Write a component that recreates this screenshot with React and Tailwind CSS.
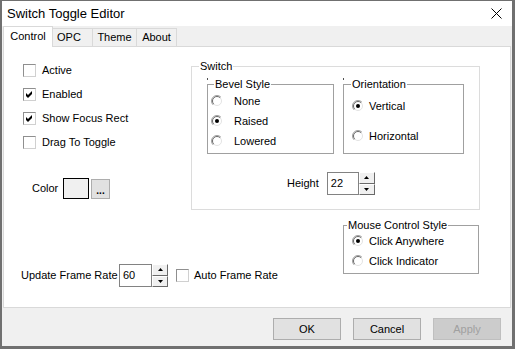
import React from "react";

// classic 3d check box
function Check({ checked }) {
  return (
    <span className="flex h-[13px] w-[13px] shrink-0 items-center justify-center border border-[#d0d0d0] border-t-[#8f8f8f] border-l-[#8f8f8f] bg-white">
      {checked && (
        <svg width="7" height="7" viewBox="0 0 7 7">
          <polygon points="0,2 2,4 6,0 6,3 2,7 0,5" fill="#000" />
        </svg>
      )}
    </span>
  );
}

function Radio({ on }) {
  return (
    <svg width="12" height="12" viewBox="0 0 12 12" className="shrink-0">
      <circle cx="6" cy="6" r="5.5" fill="#fff" />
      <path d="M9.9 2.1 A5.5 5.5 0 0 0 2.1 9.9" stroke="#a0a0a0" fill="none" />
      <path d="M9.2 2.8 A4.5 4.5 0 0 0 2.8 9.2" stroke="#6a6a6a" fill="none" />
      <path d="M2.8 9.2 A4.5 4.5 0 0 0 9.2 2.8" stroke="#e3e3e3" fill="none" />
      {on && <circle cx="6" cy="6" r="2" fill="#000" />}
    </svg>
  );
}

function SpinBtn({ up }) {
  return (
    <div className="flex flex-1 items-center justify-center border border-[#696969] border-t-white border-l-white bg-[#f0f0f0]">
      <svg width="5" height="3" viewBox="0 0 5 3">
        {up ? <polygon points="2.5,0 5,3 0,3" fill="#000" /> : <polygon points="0,0 5,0 2.5,3" fill="#000" />}
      </svg>
    </div>
  );
}

function NumBox({ value, width }) {
  return (
    <div className="flex h-[23px] items-center">
      <div className={`flex h-full items-center border border-[#828282] bg-white pl-[3px] ${width}`}>{value}</div>
      <div className="flex h-full w-[16px] flex-col">
        <SpinBtn up />
        <SpinBtn />
      </div>
    </div>
  );
}

function CheckRow({ label, checked }) {
  return (
    <div className="flex h-[24px] items-center gap-[6px]">
      <Check checked={checked} />
      <span>{label}</span>
    </div>
  );
}

function RadioRow({ label, on, gap }) {
  return (
    <div className={`flex h-[20px] items-center ${gap}`}>
      <Radio on={on} />
      <span>{label}</span>
    </div>
  );
}

function Group({ label, className, labelPos, children, dot }) {
  return (
    <div className={`relative border ${className}`}>
      <span className={`absolute -top-[7px] bg-white px-px leading-[13px] ${labelPos}`}>{label}</span>
      {dot && <span className="absolute -top-[7px] -left-px h-[2px] w-px bg-[#505050]" />}
      {children}
    </div>
  );
}

const tabs = [
  { name: "OPC", cls: "w-[40px] pl-[4px]" },
  { name: "Theme", cls: "w-[44px] justify-center" },
  { name: "About", cls: "w-[40px] justify-center" },
];

export default function App() {
  return (
    <div className="flex h-[349px] w-[515px] flex-col border-t border-l-2 border-r-[3px] border-b-[3px] border-[#707070] bg-[#f0f0f0] font-['Liberation_Sans',Arial,sans-serif] text-[11px] text-black">
      {/* title bar */}
      <div className="flex h-[25px] shrink-0 items-center justify-between bg-white pl-[5px] pr-[10px]">
        <span className="text-[13px]">Switch Toggle Editor</span>
        <svg width="11" height="11" viewBox="0 0 11 11">
          <path d="M0.5 0.5 L10.5 10.5 M10.5 0.5 L0.5 10.5" stroke="#000" strokeWidth="1" />
        </svg>
      </div>

      {/* tabs */}
      <div className="flex h-[20px] shrink-0 items-end pl-px">
        <div className="relative z-10 -mb-px flex h-[21px] w-[50px] items-center justify-center border border-b-0 border-[#d9d9d9] bg-white pb-px">
          Control
        </div>
        {tabs.map((t) => (
          <div key={t.name} className={`flex h-[18px] items-center border-t border-r border-[#d9d9d9] bg-[#f0f0f0] ${t.cls}`}>
            {t.name}
          </div>
        ))}
      </div>

      {/* panel */}
      <div className="mx-px flex h-[262px] shrink-0 flex-col border border-[#d9d9d9] bg-white pt-[11px]">
        <div className="flex items-start">
          <div className="ml-[19px] flex w-[168px] flex-col">
            <CheckRow label="Active" />
            <CheckRow label="Enabled" checked />
            <CheckRow label="Show Focus Rect" checked />
            <CheckRow label="Drag To Toggle" />
            <div className="mt-[24px] flex h-[21px] items-center">
              <span className="ml-[9px] w-[31px]">Color</span>
              <div className="h-[21px] w-[26px] border border-black bg-[#f0f0f0]" />
              <div className="ml-[2px] flex h-[20px] w-[19px] items-end justify-center border border-[#adadad] bg-[#e1e1e1] pb-[3px] text-[10px] font-bold leading-[8px]">
                ...
              </div>
            </div>
          </div>

          <Group label="Switch" className="mt-[8px] h-[144px] w-[289px] border-[#dcdcdc]" labelPos="left-[7px]">
            <div className="flex gap-[9px] pl-[15px] pt-[17px]">
              <Group label="Bevel Style" className="h-[70px] w-[127px] border-[#a0a0a0]" labelPos="left-[6px]" dot>
                <div className="flex flex-col pl-[3px] pt-[6px]">
                  <RadioRow label="None" gap="gap-[11px]" />
                  <RadioRow label="Raised" on gap="gap-[11px]" />
                  <RadioRow label="Lowered" gap="gap-[11px]" />
                </div>
              </Group>
              <Group label="Orientation" className="h-[70px] w-[121px] border-[#a0a0a0]" labelPos="left-[7px]" dot>
                <div className="flex flex-col gap-[10px] pl-[8px] pt-[11px]">
                  <RadioRow label="Vertical" on gap="gap-[5px]" />
                  <RadioRow label="Horizontal" gap="gap-[5px]" />
                </div>
              </Group>
            </div>
            <div className="ml-[95px] mt-[18px] flex items-center gap-[8px]">
              <span>Height</span>
              <NumBox value="22" width="w-[32px]" />
            </div>
          </Group>
        </div>

        <div className="mt-[15px] flex items-start">
          <div className="ml-[17px] mt-[39px] flex h-[23px] w-[322px] items-center">
            <span className="w-[98px]">Update Frame Rate</span>
            <NumBox value="60" width="w-[33px]" />
            <div className="ml-[8px]">
              <Check />
            </div>
            <span className="ml-[5px]">Auto Frame Rate</span>
          </div>
          <Group label="Mouse Control Style" className="h-[49px] w-[136px] border-[#a0a0a0]" labelPos="left-[3px]">
            <div className="flex flex-col pl-[8px] pt-[5px]">
              <RadioRow label="Click Anywhere" on gap="gap-[5px]" />
              <RadioRow label="Click Indicator" gap="gap-[5px]" />
            </div>
          </Group>
        </div>
      </div>

      {/* buttons */}
      <div className="mt-[10px] flex justify-end gap-[12px] pr-[11px]">
        <button className="h-[22px] w-[68px] border border-[#adadad] bg-[#e1e1e1] text-[11px]">OK</button>
        <button className="h-[22px] w-[68px] border border-[#adadad] bg-[#e1e1e1] text-[11px]">Cancel</button>
        <button className="h-[22px] w-[68px] border border-[#bfbfbf] bg-[#cccccc] text-[11px] text-[#a0a0a0]">Apply</button>
      </div>
    </div>
  );
}
